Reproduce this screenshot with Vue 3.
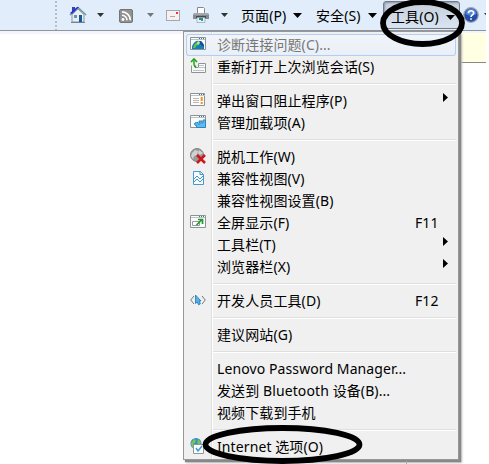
<script setup>
const items = [
  { label: '诊断连接问题(C)...', icon: 'diagnose', disabled: true },
  { label: '重新打开上次浏览会话(S)', icon: 'reopen' },
  { separator: true },
  { label: '弹出窗口阻止程序(P)', icon: 'popup', submenu: true },
  { label: '管理加载项(A)', icon: 'addon' },
  { separator: true },
  { label: '脱机工作(W)', icon: 'offline' },
  { label: '兼容性视图(V)', icon: 'compat' },
  { label: '兼容性视图设置(B)' },
  { label: '全屏显示(F)', icon: 'fullscreen', shortcut: 'F11' },
  { label: '工具栏(T)', submenu: true },
  { label: '浏览器栏(X)', submenu: true },
  { separator: true },
  { label: '开发人员工具(D)', icon: 'dev', shortcut: 'F12' },
  { separator: true },
  { label: '建议网站(G)' },
  { separator: true },
  { label: 'Lenovo Password Manager...' },
  { label: '发送到 Bluetooth 设备(B)...' },
  { label: '视频下载到手机' },
  { separator: true },
  { label: 'Internet 选项(O)', icon: 'options' }
]
</script>

<template>
  <div class="page">
    <header class="toolbar">
      <span class="grip"></span>
      <svg class="home" width="18" height="18" viewBox="0 0 18 18">
        <path d="M3 8.500 9 3l6 5.500V16H3z" fill="#e9eef2" stroke="#8797a8" />
        <path d="M3 1h3v5H3z" fill="#3040bd" />
        <path d="M1 9 9 1.500 17 9" fill="none" stroke="#7e8fa1" stroke-width="1.600" />
        <path d="m1 7 7-6h2L3 8z" fill="#2634c9" />
        <path d="M5 9h3v3H5z" fill="#6d91a9" />
        <path d="M10 9h3v7h-3z" fill="#17599d" />
        <path d="M2 16.500h14" stroke="#718395" />
      </svg>
      <span class="caret home-caret"></span>
      <svg class="rss" width="14" height="14" viewBox="0 0 14 14">
        <rect x=".5" y=".5" width="13" height="13" rx="1.500" fill="#929292" stroke="#747474" />
        <circle cx="4" cy="10.500" r="1.400" fill="#fff" />
        <path d="M3 6.300a5 5 0 0 1 5 5M3 2.900a8.400 8.400 0 0 1 8.400 8.400" fill="none" stroke="#fff" stroke-width="1.600" />
      </svg>
      <span class="caret rss-caret"></span>
      <svg class="mail" width="14" height="11" viewBox="0 0 14 11">
        <rect x=".5" y=".5" width="13" height="10" fill="#f4f1f0" stroke="#aaa5aa" />
        <path d="M10 2h2v2h-2z" fill="#ed3838" /><path d="M4 6.500h5" stroke="#aaa" />
      </svg>
      <svg class="printer" width="16" height="16" viewBox="0 0 16 16">
        <path d="M4.500 7V.5h6l1 1V7" fill="#fff" stroke="#84888d" />
        <path d="M1 6h14l1 2v4H0V8z" fill="#858990" />
        <path d="M1 7h14" stroke="#c3c6ca" /><path d="M3 9h10v2H3z" fill="#44494e" />
        <path d="M4 10.500h8v5H4z" fill="#e4f2f7" stroke="#8e969c" stroke-width=".6" />
        <path d="M6 11h4v2H6z" fill="#268ba1" /><path d="M8 13h2v1H8z" fill="#42a745" />
      </svg>
      <span class="caret print-caret"></span>
      <span class="command page-command">页面(P)<i class="command-arrow"></i></span>
      <span class="command safety-command">安全(S)<i class="command-arrow"></i></span>
      <span class="command tools-command">工具(O)<i class="command-arrow"></i></span>
      <svg class="help" width="16" height="16" viewBox="0 0 16 16">
        <circle cx="8" cy="8" r="7.300" fill="#254eab" stroke="#9ea6b3" stroke-width="1.300" />
        <path d="M2.500 7a5.500 5.500 0 0 1 11 0Q8 10 2.500 7" fill="#5382d3" />
        <path d="M5.500 6.200C5.500 3 10.700 3 10.700 6c0 2-2.700 1.800-2.700 4M8 11.200v1.600" fill="none" stroke="#fff" stroke-width="1.700" />
      </svg>
      <span class="caret help-caret"></span>
    </header>
    <main class="content">
      <div class="notice"></div>
      <nav class="menu">
        <template v-for="(item, index) in items" :key="index">
          <div v-if="item.separator" class="separator"></div>
          <div v-else class="item" :class="{ disabled: item.disabled }">
            <span class="icon">
              <svg v-if="item.icon" width="16" height="16" viewBox="0 0 16 16">
                <template v-if="['diagnose', 'popup', 'addon', 'fullscreen'].includes(item.icon)">
                  <path v-if="item.icon === 'popup'" d="M.5 1.500h14v12H.5z" fill="#fcfcfc" stroke="#8c9398" />
                  <path v-else d="M.5 1.500h15v12H.5z" fill="#fafcfc" stroke="#899399" />
                  <path d="M1 3.500h14" stroke="#b9c2c6" />
                  <path d="M9 2.500h1m1 0h1m1 0h1" stroke="#506b83" />
                </template>
                <g v-if="item.icon === 'diagnose'">
                  <path d="M2 13V10q3-6 7-5 4 0 5 5v3z" fill="#197eb8" />
                  <path d="m3 12 1-3 4-4 2 1-2 3-2 1-1 2z" fill="#65c64c" />
                  <path d="M9 5h2l3 4v2l-3-2-2-2z" fill="#154b9c" /><path d="m7 7 2-2 1 2-2 2z" fill="#c7ee91" />
                </g>
                <g v-else-if="item.icon === 'reopen'">
                  <path d="M1.500 7.500v7h14v-9h-7v4h-3" fill="#f8f9f9" stroke="#8c9499" />
                  <path d="M9 7.500h5M8 9.500h7M3 12.500h11" stroke="#bec4c8" />
                  <path d="M6 9.500Q3.500 8 4 2M1 4l3-3 3 3" fill="none" stroke="#249e20" stroke-width="1.700" />
                  <path d="M4 2v5" stroke="#64d352" />
                </g>
                <g v-else-if="item.icon === 'popup'">
                  <path d="M3 6.500h6M3 8.500h6M3 10.500h6" stroke="#b8b8b8" />
                  <path d="M11.700 5v4m0 1v2" stroke="#ee941d" stroke-width="2" />
                </g>
                <path v-else-if="item.icon === 'addon'" d="M6.500 13.500v-2q-2 0-2-1.500t2-1.500H8v1.500h2v-1.500H9V7h3v2h1V6h2.500v7.500z" fill="#62baea" stroke="#2587c6" />
                <g v-else-if="item.icon === 'offline'">
                  <circle cx="7" cy="7" r="6.500" fill="#999" stroke="#858585" />
                  <path d="m2 5 3-3 3 1-1 4-3 1-1 3-2-3zm7-3 4 3-3 2-2-2z" fill="#d1d1d1" />
                  <path d="m7 7 8 8m0-8-8 8" stroke="#cc171c" stroke-width="2.500" />
                </g>
                <g v-else-if="item.icon === 'compat'">
                  <path d="M3.500 1.500h7l3 3v10h-10z" fill="#f5fbff" stroke="#439bd1" />
                  <path d="M10 1.500v3h3M4 9l3-3 3 3 3-3M4 12l3-3 3 3 3-3" fill="none" stroke="#3684b8" stroke-width=".9" />
                </g>
                <g v-else-if="item.icon === 'fullscreen'">
                  <path d="M2.500 7.500h7v4h-7z" fill="#fff" stroke="#929ba0" />
                  <path d="m6.500 11 5-5M8 5.500h4.500V10" fill="none" stroke="#259c29" stroke-width="1.700" />
                </g>
                <g v-else-if="item.icon === 'dev'">
                  <path d="M4 4 .7 8 4 12M12 4l3.300 4L12 12" fill="none" stroke="#74787a" />
                  <path d="M5.500 3 11 9H9.300l1 3-1.800.8L7.300 10l-1.800 1.500z" fill="#55b1e9" stroke="#1979b6" stroke-width=".8" />
                </g>
                <g v-else-if="item.icon === 'options'">
                  <circle cx="6" cy="5.500" r="5.500" fill="#338bc7" />
                  <path d="m1 5 3-4 2 1-1 3-2 1 1 3-2 1zm7-4 3 3-1 3-3-2z" fill="#78c45b" />
                  <path d="M3.500 6.500h10v9h-10z" fill="#fff" stroke="#8b969d" />
                  <path d="m6 10 2 3 4-5" fill="none" stroke="#3e9acf" stroke-width="1.500" />
                </g>
              </svg>
            </span>
            <span class="label">{{ item.label }}</span>
            <span v-if="item.shortcut" class="shortcut">{{ item.shortcut }}</span>
            <i v-if="item.submenu" class="submenu-arrow"></i>
          </div>
        </template>
      </nav>
      <span class="page-tick"></span>
    </main>
    <svg class="annotations" width="489" height="464" viewBox="0 0 489 464">
      <ellipse cx="422.500" cy="23" rx="39.500" ry="21" />
      <ellipse cx="282.500" cy="444.500" rx="77" ry="16.500" />
    </svg>
  </div>
</template>

<style>
body { background: #fff; }
</style>

<style scoped>
.page {
  position: relative;
  width: 489px;
  height: 464px;
  overflow: hidden;
  color: #000;
  background: #fff;
  font: 14px/22px "Noto Sans", "Noto Sans CJK SC", sans-serif;
  letter-spacing: .1px;
}
.toolbar {
  box-sizing: border-box;
  display: flex;
  align-items: flex-start;
  width: 486px;
  height: 31px;
  overflow: hidden;
  border-bottom: 1px solid #8e959f;
  background: #e1edfa;
}
.toolbar > * { flex: none; }
.grip { width: 2px; height: 29px; margin: 1px 12px 0 55px; background: repeating-linear-gradient(#b6bec7 0 2px, transparent 2px 4px); }
.home { margin-top: 6px; }
.rss { margin: 9px 0 0 15px; }
.mail { margin: 10px 0 0 12px; }
.printer { margin: 7px 0 0 13px; }
.caret { width: 7px; height: 4px; margin-top: 13px; background: #333; clip-path: polygon(0 0, 100% 0, 50% 100%); }
.home-caret { margin-left: 10px; }
.rss-caret { margin-left: 14px; background: #777; }
.print-caret { margin-left: 12px; }
.command { box-sizing: border-box; display: flex; align-items: flex-start; height: 29px; padding-top: 5px; white-space: nowrap; }
.command-arrow { width: 9px; height: 5px; margin: 8px 0 0 auto; background: #000; clip-path: polygon(0 0, 100% 0, 50% 100%); }
.page-command { width: 61px; margin-left: 13px; }
.safety-command { width: 61px; margin-left: 14px; }
.tools-command { width: 77px; margin: 1px 0 0 6px; padding: 4px 4px 0 7px; height: 28px; border: 1px solid #727c89; border-radius: 3px; background: linear-gradient(#c5ced9, #dae5f2); box-shadow: inset 1px 1px 2px #8a96a5; }
.tools-command .command-arrow { margin-top: 9px; }
.help { margin: 7px 0 0 3px; }
.help-caret { margin-left: 5px; }
.content { position: relative; display: flex; align-items: flex-start; width: 486px; height: 433px; padding-left: 183px; box-sizing: border-box; }
.content::before { content: ""; position: absolute; top: 0; left: 0; right: 0; height: 3px; background: #f2f6fc; }
.notice { position: absolute; top: 2px; left: 440px; right: 0; height: 29px; border-bottom: 1px solid #888; background: #ffffe1; }
.menu {
  position: relative;
  flex: none;
  box-sizing: border-box;
  width: 276px;
  height: 429px;
  padding: 2px 2px 1px;
  border: 1px solid #979797;
  background: linear-gradient(90deg, transparent 27px, #dfdfdf 27px 28px, #fff 28px 29px, transparent 29px), #f0f0f0;
  box-shadow: 2px 2px 1px #888, 3px 3px 2px #bbb;
}
.item { box-sizing: border-box; display: flex; width: 270px; height: 22px; padding-left: 4px; }
.item.disabled { color: #777; border-radius: 3px; background: linear-gradient(#f2f5f9, #e9eff8); box-shadow: inset 0 0 0 1px #afcff7; }
.icon { flex: none; width: 27px; height: 22px; padding-top: 2px; box-sizing: border-box; }
.icon svg { display: block; }
.label { white-space: nowrap; }
.shortcut { width: 41px; margin-left: auto; }
.submenu-arrow { width: 5px; height: 9px; margin: 3px 8px 0 auto; background: #000; clip-path: polygon(0 0, 100% 50%, 0 100%); }
.separator { box-sizing: border-box; height: 12px; margin-left: 27px; padding-top: 5px; }
.separator::before { content: ""; display: block; height: 1px; border-bottom: 1px solid #fff; background: #dfdfdf; }
.page-tick { position: absolute; left: 406px; top: 430px; width: 1px; height: 4px; background: #aaa; }
.annotations { position: absolute; top: 0; left: 0; }
.annotations ellipse { fill: none; stroke: #000; stroke-width: 5.800; }
</style>
